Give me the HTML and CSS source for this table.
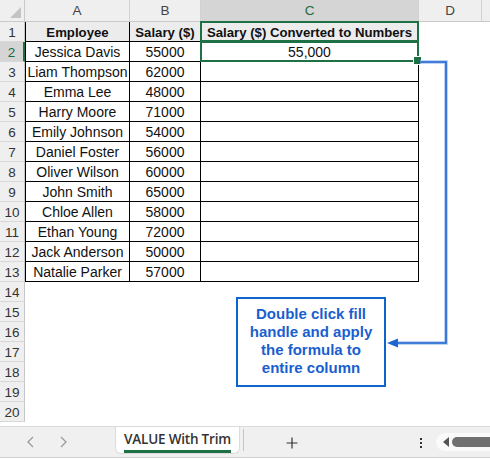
FILE: index.html
```html
<!DOCTYPE html>
<html>
<head>
<meta charset="utf-8">
<link rel="stylesheet" href="styles.css">
</head>
<body>
<div class="page">
  <div class="sheet">
    <div class="corner"></div>
    <div class="ch">A</div><div class="ch">B</div><div class="ch sel">C</div><div class="ch">D</div><div class="ch last"></div>

    <div class="rh">1</div>
    <div class="t hd first">Employee</div><div class="t hd">Salary ($)</div><div class="t hd green">Salary ($) Converted to Numbers</div><div class="c"></div><div class="c"></div>

    <div class="rh sel">2</div>
    <div class="t first">Jessica Davis</div><div class="t">55000</div><div class="t active">55,000</div><div class="c"></div><div class="c"></div>
    <div class="rh">3</div>
    <div class="t first">Liam Thompson</div><div class="t">62000</div><div class="t"></div><div class="c"></div><div class="c"></div>
    <div class="rh">4</div>
    <div class="t first">Emma Lee</div><div class="t">48000</div><div class="t"></div><div class="c"></div><div class="c"></div>
    <div class="rh">5</div>
    <div class="t first">Harry Moore</div><div class="t">71000</div><div class="t"></div><div class="c"></div><div class="c"></div>
    <div class="rh">6</div>
    <div class="t first">Emily Johnson</div><div class="t">54000</div><div class="t"></div><div class="c"></div><div class="c"></div>
    <div class="rh">7</div>
    <div class="t first">Daniel Foster</div><div class="t">56000</div><div class="t"></div><div class="c"></div><div class="c"></div>
    <div class="rh">8</div>
    <div class="t first">Oliver Wilson</div><div class="t">60000</div><div class="t"></div><div class="c"></div><div class="c"></div>
    <div class="rh">9</div>
    <div class="t first">John Smith</div><div class="t">65000</div><div class="t"></div><div class="c"></div><div class="c"></div>
    <div class="rh">10</div>
    <div class="t first">Chloe Allen</div><div class="t">58000</div><div class="t"></div><div class="c"></div><div class="c"></div>
    <div class="rh">11</div>
    <div class="t first">Ethan Young</div><div class="t">72000</div><div class="t"></div><div class="c"></div><div class="c"></div>
    <div class="rh">12</div>
    <div class="t first">Jack Anderson</div><div class="t">50000</div><div class="t"></div><div class="c"></div><div class="c"></div>
    <div class="rh">13</div>
    <div class="t first">Natalie Parker</div><div class="t">57000</div><div class="t"></div><div class="c"></div><div class="c"></div>

    <div class="rh">14</div><div class="c"></div><div class="c"></div><div class="c"></div><div class="c"></div><div class="c"></div>
    <div class="rh">15</div><div class="c"></div><div class="c"></div><div class="c"></div><div class="c"></div><div class="c"></div>
    <div class="rh">16</div><div class="c"></div><div class="c"></div><div class="c"></div><div class="c"></div><div class="c"></div>
    <div class="rh">17</div><div class="c"></div><div class="c"></div><div class="c"></div><div class="c"></div><div class="c"></div>
    <div class="rh">18</div><div class="c"></div><div class="c"></div><div class="c"></div><div class="c"></div><div class="c"></div>
    <div class="rh">19</div><div class="c"></div><div class="c"></div><div class="c"></div><div class="c"></div><div class="c"></div>
    <div class="rh">20</div><div class="c"></div><div class="c"></div><div class="c"></div><div class="c"></div><div class="c"></div>
  </div>

  <svg class="arrow" width="490" height="459" viewBox="0 0 490 459">
    <polyline points="420,62 446,62 446,343 396,343" fill="none" stroke="#a9c6ee" stroke-width="3.5"/>
    <polyline points="420,62 446,62 446,343 396,343" fill="none" stroke="#1f66d1" stroke-width="1.6"/>
    <polygon points="387,343 398,338.5 398,347.5" fill="#1f66d1"/>
  </svg>

  <div class="callout">Double click fill handle and apply the formula to entire column</div>

  <div class="tabbar">
    <div class="nav">
      <svg width="9" height="12" viewBox="0 0 9 12"><polyline points="7,1 2,6 7,11" fill="none" stroke="#9a9a9a" stroke-width="1.3"/></svg>
      <svg width="9" height="12" viewBox="0 0 9 12"><polyline points="2,1 7,6 2,11" fill="none" stroke="#9a9a9a" stroke-width="1.3"/></svg>
    </div>
    <div class="tab"><span class="tab-label">VALUE With Trim</span></div>
    <div class="sep"></div>
    <div class="add">
      <svg width="12" height="12" viewBox="0 0 12 12"><path d="M6 0.5V11.5M0.5 6H11.5" stroke="#333" stroke-width="1.2"/></svg>
    </div>
    <div class="dots"><i></i><i></i><i></i></div>
    <div class="scroll">
      <svg width="6" height="10" viewBox="0 0 6 10"><polygon points="0,5 6,0 6,10" fill="#555"/></svg>
      <div class="thumb"></div>
    </div>
  </div>
</div>
</body>
</html>
```

FILE: styles.css
```css
* { box-sizing: border-box; }
html, body { margin: 0; padding: 0; background: #fff; }
body { width: 490px; height: 459px; overflow: hidden; font-family: "Liberation Sans", Arial, sans-serif; }

.page { position: relative; width: 490px; height: 459px; }

.sheet {
  display: grid;
  grid-template-columns: 25px 105px 71px 218px 63px 8px;
  grid-template-rows: 22px repeat(20, 20px);
  font-size: 14px;
  color: #111;
}

.corner {
  position: relative;
  background: #efefef;
  border-right: 1px solid #c9c9c9;
  border-bottom: 1px solid #c9c9c9;
}
.corner::after {
  content: "";
  position: absolute;
  right: 3px;
  bottom: 3px;
  width: 0; height: 0;
  border-left: 11px solid transparent;
  border-bottom: 11px solid #c4c4c4;
}

.ch {
  background: #efefef;
  border-right: 1px solid #d2d2d2;
  border-bottom: 1px solid #c9c9c9;
  display: flex; align-items: center; justify-content: center;
  font-family: "Liberation Sans", Arial, sans-serif;
  font-size: 13.5px;
  color: #444;
}
.ch.sel { background: #d5d5d5; color: #1e6b41; }
.ch.last { border-right: none; }

.rh {
  background: #efefef;
  border-right: 1px solid #c6c6c6;
  border-bottom: 1px solid #d8d8d8;
  display: flex; align-items: center; justify-content: center;
  font-size: 13.5px;
  color: #333;
  padding-top: 1px;
}
.rh.sel { background: #d5d5d5; color: #1e6b41; border-right: 2px solid #1e7145; }

.c { background: #fff; }

.t {
  position: relative;
  background: #fff;
  border-right: 1px solid #000;
  border-bottom: 1px solid #000;
  display: flex; align-items: center; justify-content: center;
  white-space: nowrap;
  padding-top: 1px;
}
.t.first { border-left: 1px solid #000; }
.t.hd { background: #ececec; font-weight: bold; font-size: 13.2px; }

.t.green::after,
.t.active::after {
  content: "";
  position: absolute;
  left: -1px; top: -1px; right: -1px; bottom: -1px;
  border: 2px solid #1e7145;
  pointer-events: none;
  z-index: 2;
}
.t.active::before {
  content: "";
  position: absolute;
  right: -4px; bottom: -4px;
  width: 7px; height: 7px;
  background: #1e7145;
  border: 1px solid #fff;
  z-index: 3;
}

.arrow { position: absolute; left: 0; top: 0; pointer-events: none; z-index: 4; }

.callout {
  position: absolute;
  left: 236px; top: 297px;
  width: 150px; height: 90px;
  border: 2.5px solid #0b66cc;
  background: #fff;
  color: #1a5fcf;
  font-weight: bold;
  font-size: 15px;
  line-height: 18px;
  text-align: center;
  padding: 6px 6px 0;
  z-index: 5;
}

.tabbar {
  margin-top: 4px;
  height: 32px;
  background: #f0f0f0;
  border-top: 1px solid #dadada;
  border-bottom: 1px solid #cfcfcf;
  display: flex;
  align-items: flex-start;
}
.nav {
  width: 115px;
  height: 30px;
  display: flex; align-items: center;
  gap: 24px;
  padding-left: 26px;
}
.tab {
  width: 125px;
  height: 27px;
  background: #fff;
  border: 1px solid #dcdcdc;
  border-top: none;
  border-radius: 0 0 6px 6px;
  display: flex; justify-content: center;
  padding-top: 4px;
}
.tab-label {
  font-family: "Open Sans", "Liberation Sans", sans-serif;
  font-weight: 600;
  font-size: 13.5px;
  color: #333;
  line-height: 17px;
  height: 22px;
  border-bottom: 3px solid #1e7145;
  letter-spacing: -0.2px;
}
.sep { width: 1px; height: 22px; background: #c4c4c4; margin: 2px 0 0 3px; }
.add {
  width: 12px; height: 12px;
  margin: 10px 0 0 42px;
  display: flex;
}
.dots {
  margin: 11px 0 0 122px;
  display: flex; flex-direction: column; gap: 2px;
}
.dots i { display: block; width: 2px; height: 2px; background: #333; }
.scroll {
  margin: 6px 0 0 14px;
  flex: 1;
  height: 18px;
  background: #fafafa;
  border-radius: 9px 0 0 9px;
  display: flex; align-items: center;
  padding-left: 7px;
  gap: 3px;
}
.thumb { flex: 1; height: 10px; background: #707070; border-radius: 5px 0 0 5px; }
```
